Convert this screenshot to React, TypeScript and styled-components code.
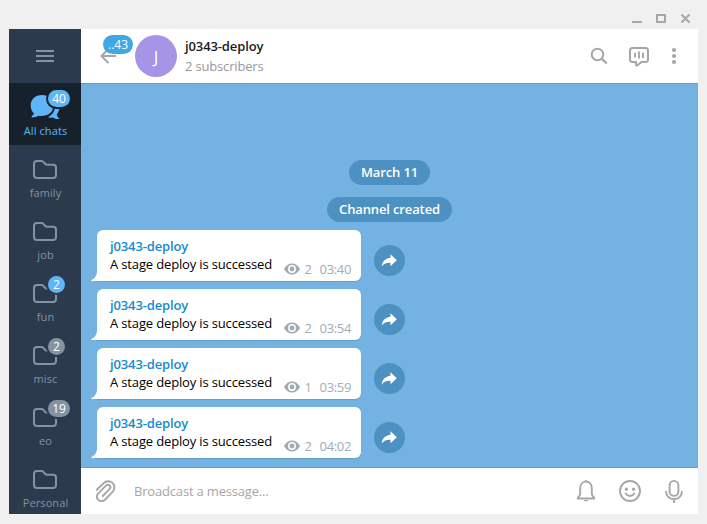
import React from "react";
import styled, { createGlobalStyle } from "styled-components";

const GlobalStyle = createGlobalStyle`
  * { box-sizing: border-box; }
  body { margin: 0; background: #f0f0f0; font-family: "Open Sans", "Noto Sans", sans-serif; font-size: 13px; overflow: hidden; }
  svg { display: block; flex: none; }
`;

const Frame = styled.div`
  width: 707px;
  height: 524px;
  padding: 0 9px 10px;
  background: #f0f0f0;
  display: flex;
  flex-direction: column;
`;

const TitleBar = styled.div`
  height: 29px;
  flex: none;
  display: flex;
  justify-content: flex-end;
  align-items: flex-start;
  padding: 12px 5px 0 0;
`;

const Body = styled.div`
  flex: 1;
  min-height: 0;
  display: flex;
`;

const Sidebar = styled.nav`
  width: 72px;
  flex: none;
  background: #2b3a4c;
  overflow: hidden;
`;

const MenuButton = styled.div`
  height: 54px;
  display: flex;
  justify-content: center;
  padding-top: 21px;
`;

const Tab = styled.div<{ $active?: boolean }>`
  position: relative;
  height: 62px;
  padding-top: 10px;
  display: flex;
  flex-direction: column;
  align-items: center;
  background: ${(p) => (p.$active ? "#17212b" : "#2b3a4c")};
  color: ${(p) => (p.$active ? "#5eb5f7" : "#8393a3")};
`;

const TabLabel = styled.span`
  font-size: 11px;
  letter-spacing: 0.1px;
  line-height: 14px;
  margin-top: -3px;
  padding-left: 1px;
  white-space: nowrap;
`;

const TabBadge = styled.span<{ $muted?: boolean; $active?: boolean; $wide?: boolean }>`
  position: absolute;
  left: 39px;
  top: 7px;
  width: ${(p) => (p.$wide ? 22 : 17)}px;
  height: 17px;
  border-radius: 9px;
  background: ${(p) => (p.$muted ? "#8393a3" : "#5eb5f7")};
  box-shadow: 0 0 0 2px ${(p) => (p.$active ? "#17212b" : "#2b3a4c")};
  color: #fff;
  font-size: 12px;
  line-height: 17px;
  text-align: center;
`;

const Main = styled.main`
  flex: 1;
  min-width: 0;
  display: flex;
  flex-direction: column;
`;

const Header = styled.header`
  height: 54px;
  flex: none;
  background: #fff;
  display: flex;
  align-items: center;
  padding: 0 14px 0 18px;
`;

const Back = styled.div`
  position: relative;
  width: 36px;
  height: 54px;
  padding-top: 18px;
`;

const BackBadge = styled.span`
  position: absolute;
  left: 4px;
  top: 6px;
  width: 30px;
  height: 19px;
  border-radius: 10px;
  background: #40a7e3;
  color: #fff;
  font-size: 12px;
  line-height: 19px;
  text-align: center;
`;

const Avatar = styled.div`
  width: 42px;
  height: 42px;
  border-radius: 50%;
  background: #a695e7;
  color: #fff;
  font-size: 17px;
  line-height: 43px;
  text-align: center;
`;

const Titles = styled.div`
  flex: 1;
  padding: 0 0 0 8px;
`;

const ChatTitle = styled.div`
  font-weight: 600;
  letter-spacing: -0.12px;
  line-height: 20px;
  color: #1c1c1c;
`;

const ChatStatus = styled.div`
  letter-spacing: -0.17px;
  line-height: 20px;
  color: #999;
`;

const HeaderIcons = styled.div`
  display: flex;
  align-items: center;
  gap: 16px;

  & > :last-child {
    margin-left: -3px;
  }
`;

const History = styled.section`
  flex: 1;
  min-height: 0;
  background: #74b3e1;
  border-top: 1px solid #5f9fcd;
  border-bottom: 1px solid #5f9fcd;
  display: flex;
  flex-direction: column;
  justify-content: flex-end;
  padding: 0 0 9px 16px;
`;

const ServiceList = styled.div`
  display: flex;
  flex-direction: column;
  align-items: center;
  gap: 12px;
  padding-right: 16px;
  margin-bottom: 8px;
`;

const ServicePill = styled.div`
  height: 25px;
  padding: 0 12px;
  border-radius: 13px;
  background: #4c91c1;
  color: #fff;
  font-weight: 600;
  letter-spacing: -0.13px;
  line-height: 25px;
`;

const Messages = styled.div`
  display: flex;
  flex-direction: column;
  gap: 8px;
`;

const MessageRow = styled.div`
  display: flex;
  align-items: center;
  gap: 13px;
`;

const Bubble = styled.article`
  position: relative;
  width: 264px;
  height: 51px;
  padding: 7px 10px 0 13px;
  border-radius: 6px 6px 6px 0;
  background: #fff;
  box-shadow: 0 1px 1px #679fc8;
`;

const Tail = styled.svg`
  position: absolute;
  left: -6px;
  bottom: 0;
`;

const Author = styled.div`
  color: #168acd;
  font-weight: 600;
  letter-spacing: -0.13px;
  line-height: 19px;
`;

const MessageLine = styled.div`
  display: flex;
  justify-content: space-between;
  letter-spacing: -0.15px;
  line-height: 16px;
  color: #000;
`;

const Meta = styled.div`
  display: flex;
  align-items: center;
  height: 18px;
  margin-top: 4px;
  color: #a0acb6;
  letter-spacing: -0.35px;
`;

const Views = styled.span`
  width: 15px;
  margin-left: 5px;
`;

const Share = styled.div`
  width: 31px;
  height: 31px;
  margin-top: 10px;
  border-radius: 50%;
  background: #4c91c1;
  display: flex;
  align-items: center;
  justify-content: center;
`;

const Composer = styled.footer`
  height: 46px;
  flex: none;
  background: #fff;
  display: flex;
  align-items: center;
  padding: 0 12px 0 14px;
`;

const Placeholder = styled.div`
  flex: 1;
  padding-left: 17px;
  letter-spacing: -0.18px;
  color: #a6a6a6;
`;

const ComposerIcons = styled.div`
  display: flex;
  gap: 20px;
`;

const FolderIcon = () => (
  <svg width="28" height="34" viewBox="0 0 28 34" fill="none" stroke="#8393a3" strokeWidth="2" strokeLinejoin="round">
    <path d="M6 6h4.6q1 0 1.7 .8l2 2.2q.7 .8 1.8 .8H22q3 0 3 2.6V20q0 3-3 3H6q-3 0-3-3V9q0-3 3-3Z" />
  </svg>
);

const ChatsIcon = () => (
  <svg width="32" height="34" viewBox="0 0 32 34" fill="#5eb5f7">
    <path d="M13 2C6.200 2 1.700 6.500 1.700 12.500c0 3.800 1.300 6.200 3.400 8.100-.5 1-1.200 1.700-2.300 2.600-.7.600-.4 1.200.4 1.200 2.600 0 4.400-.6 6-1.600C17.900 24 24.200 20 24.200 13 24.200 6.500 19.500 2 13 2Z" />
    <path d="M26 14.500h4.500c-.2 3-1 4.800-2.700 6.700.3 1.900.9 2.900 2.200 4 .5.500.3.900-.3.900-2.500 0-4.100-.5-5.600-1.600-2 .4-3.700.2-5.200-.3 3.900-1.700 6.400-5.200 7.100-9.700Z" />
  </svg>
);

const ArrowLeft = () => (
  <svg width="20" height="20" viewBox="0 0 20 20" fill="none" stroke="#a6a6a6" strokeWidth="2">
    <path d="M17 9H2.500M9.500 2 2.500 9l7 7" />
  </svg>
);

const SearchIcon = () => (
  <svg width="24" height="24" viewBox="0 0 24 24" fill="none" stroke="#a6a6a6" strokeWidth="2">
    <circle cx="10.500" cy="10.500" r="5.800" />
    <path d="m14.800 14.800 5 4.700" strokeWidth="2.300" />
  </svg>
);

const LiveIcon = () => (
  <svg width="24" height="24" viewBox="0 0 24 24" fill="none" stroke="#a6a6a6" strokeWidth="2" strokeLinejoin="round">
    <path d="M5.500 4h13q2.500 0 2.500 2.500v9q0 2.500-2.500 2.500H14.500l-4 3.300q-1.500 .8-1.500-.8V18H5.500q-2.500 0-2.500-2.500v-9q0-2.500 2.500-2.500Z" />
    <path d="M8 9v4.500M12 7.500v7M16 8.500v5.500" strokeWidth="1.900" />
  </svg>
);

const MoreIcon = () => (
  <svg width="20" height="24" viewBox="0 0 20 24" fill="#a6a6a6">
    <circle cx="10" cy="6" r="2.100" />
    <circle cx="10" cy="12" r="2.100" />
    <circle cx="10" cy="18" r="2.100" />
  </svg>
);

const EyeIcon = () => (
  <svg width="16" height="12" viewBox="0 0 16 12" fill="none">
    <path fill="#a0acb6" d="M0 6C1.600 2.500 4.500.5 8 .5S14.400 2.500 16 6c-1.600 3.500-4.500 5.500-8 5.500S1.600 9.500 0 6Z" />
    <circle cx="8" cy="6" r="3.200" stroke="#fff" strokeWidth="1.500" />
  </svg>
);

const ShareIcon = () => (
  <svg width="31" height="31" viewBox="0 0 31 31" fill="#fff">
    <path d="M16.500 9.300 22.800 15.300l-6.300 6v-3.500c-4-.2-6.400.8-8.300 3.200-.3.300-.5.200-.4-.2.700-4.400 3.500-7.400 8.700-8Z" />
  </svg>
);

const ClipIcon = () => (
  <svg width="22" height="24" viewBox="0.500 -0.500 22 24" fill="none" stroke="#a6a6a6" strokeWidth="1.900" strokeLinecap="round">
    <path d="M2.300 10.300 9.200 3.600C11.500 1.300 15.500 1 18 3.400c2.400 2.400 2.500 6.300.2 8.700l-7.400 7.900c-1.800 1.900-5 2.300-7 .4-2-1.800-1.800-4.600 0-6.500l7.700-7.700c1.200-1.200 2.700-1.100 3.700-.2 1 1 .9 2.500-.2 3.600l-6.700 6.900" />
  </svg>
);

const BellIcon = () => (
  <svg width="24" height="26" viewBox="0 0 24 26" fill="none" stroke="#a6a6a6" strokeWidth="1.900" strokeLinejoin="round">
    <path d="M12 3.600C8.200 3.600 6.200 6.500 6.200 10v5.500c0 2-1 3.200-2.400 4.200v.8h16.400v-.8c-1.400-1-2.400-2.200-2.400-4.200V10c0-3.500-2-6.400-5.800-6.400Z" />
    <path d="M10.500 3.500a1.500 1.500 0 0 1 3 0ZM9.500 22h5a2.600 2 0 0 1-5 0Z" fill="#a6a6a6" stroke="none" />
  </svg>
);

const SmileIcon = () => (
  <svg width="24" height="26" viewBox="0 0 24 26" fill="none" stroke="#a6a6a6" strokeWidth="1.900" strokeLinecap="round">
    <circle cx="12" cy="13" r="10" />
    <path d="M7.700 15.600c2 3.200 6.600 3.200 8.600 0" />
    <circle cx="8.400" cy="11.200" r="1.600" fill="#a6a6a6" stroke="none" />
    <circle cx="15.600" cy="11.200" r="1.600" fill="#a6a6a6" stroke="none" />
  </svg>
);

const MicIcon = () => (
  <svg width="24" height="26" viewBox="0 0 24 26" fill="none" stroke="#a6a6a6" strokeWidth="1.900">
    <rect x="7.600" y="2.900" width="8.800" height="15" rx="4.400" />
    <path d="M4 13c.2 5.200 3.500 8 8 8s7.800-2.800 8-8M12 21v4" />
  </svg>
);

const folders = [
  { label: "family" },
  { label: "job" },
  { label: "fun", badge: "2" },
  { label: "misc", badge: "2", muted: true },
  { label: "eo", badge: "19", muted: true },
  { label: "Personal" },
];

const messages = [
  { views: 2, time: "03:40" },
  { views: 2, time: "03:54" },
  { views: 1, time: "03:59" },
  { views: 2, time: "04:02" },
];

export default function App() {
  return (
    <Frame>
      <GlobalStyle />
      <TitleBar>
        <svg width="64" height="12" viewBox="0 0 64 12" fill="none" stroke="#a6a6a6" strokeWidth="2">
          <path d="M3 10h10M28 3h8v7h-8Z M52.500 2.500l8 8M60.500 2.500l-8 8" />
        </svg>
      </TitleBar>
      <Body>
        <Sidebar>
          <MenuButton>
            <svg width="18" height="12" viewBox="0 0 18 12" fill="#8393a3">
              <path d="M0 0h18v2H0zM0 5h18v2H0zM0 10h18v2H0z" />
            </svg>
          </MenuButton>
          <Tab $active>
            <ChatsIcon />
            <TabLabel>All chats</TabLabel>
            <TabBadge $active $wide>40</TabBadge>
          </Tab>
          {folders.map((f) => (
            <Tab key={f.label}>
              <FolderIcon />
              <TabLabel>{f.label}</TabLabel>
              {f.badge && <TabBadge $muted={f.muted} $wide={f.badge.length > 1}>{f.badge}</TabBadge>}
            </Tab>
          ))}
        </Sidebar>
        <Main>
          <Header>
            <Back>
              <ArrowLeft />
              <BackBadge>..43</BackBadge>
            </Back>
            <Avatar>J</Avatar>
            <Titles>
              <ChatTitle>j0343-deploy</ChatTitle>
              <ChatStatus>2 subscribers</ChatStatus>
            </Titles>
            <HeaderIcons>
              <SearchIcon />
              <LiveIcon />
              <MoreIcon />
            </HeaderIcons>
          </Header>
          <History>
            <ServiceList>
              <ServicePill>March 11</ServicePill>
              <ServicePill>Channel created</ServicePill>
            </ServiceList>
            <Messages>
              {messages.map((m) => (
                <MessageRow key={m.time}>
                  <Bubble>
                    <Tail width="7" height="10" viewBox="0 0 7 10" fill="#fff">
                      <path d="M7 0H6C6 4 4.500 7 .3 9.200 0 9.500 0 10 .6 10H7Z" />
                    </Tail>
                    <Author>j0343-deploy</Author>
                    <MessageLine>
                      <span>A stage deploy is successed</span>
                      <Meta>
                        <EyeIcon />
                        <Views>{m.views}</Views>
                        <span>{m.time}</span>
                      </Meta>
                    </MessageLine>
                  </Bubble>
                  <Share>
                    <ShareIcon />
                  </Share>
                </MessageRow>
              ))}
            </Messages>
          </History>
          <Composer>
            <ClipIcon />
            <Placeholder>Broadcast a message...</Placeholder>
            <ComposerIcons>
              <BellIcon />
              <SmileIcon />
              <MicIcon />
            </ComposerIcons>
          </Composer>
        </Main>
      </Body>
    </Frame>
  );
}
